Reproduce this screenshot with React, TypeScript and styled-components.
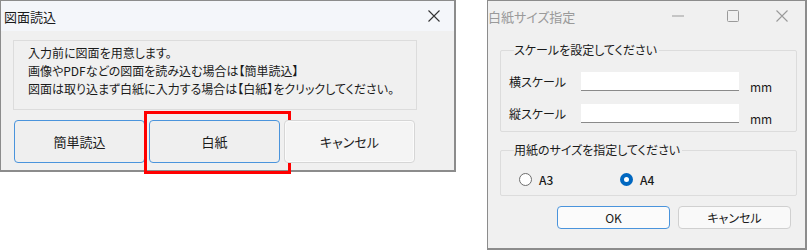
import React from 'react';
import styled, { createGlobalStyle } from 'styled-components';

const GlobalStyle = createGlobalStyle`
  html, body {
    margin: 0;
    padding: 0;
    background: #ffffff;
  }
  body {
    font-family: 'Noto Sans CJK JP', 'Noto Sans', sans-serif;
    font-feature-settings: 'palt';
    color: #1a1a1a;
  }
`;

const Page = styled.div`
  display: flex;
  align-items: flex-start;
  gap: 31px;
  width: 808px;
  height: 251px;
`;

const Dialog = styled.div<{ $w: number; $h: number }>`
  box-sizing: border-box;
  width: ${(p) => p.$w}px;
  height: ${(p) => p.$h}px;
  background: #f0f0f0;
  border: 1px solid #8c8c8c;
  border-right-width: 2px;
  border-bottom-width: 2px;
  display: flex;
  flex-direction: column;
`;

const TitleBar = styled.div<{ $inactive?: boolean }>`
  height: 30px;
  flex: none;
  display: flex;
  align-items: center;
  padding-left: ${(p) => (p.$inactive ? 0 : 3)}px;
  background: ${(p) => (p.$inactive ? '#f0f0f0' : '#f4f6fa')};
  color: ${(p) => (p.$inactive ? '#9a9a9a' : '#1a1a1a')};
  font-size: 13px;
`;

const Title = styled.span`
  flex: 1;
  padding-top: 1px;
`;

const Controls = styled.div`
  display: flex;
  align-items: center;
  height: 100%;
`;

const CtrlBtn = styled.div<{ $w: number }>`
  width: ${(p) => p.$w}px;
  height: 100%;
  display: flex;
  align-items: center;
  justify-content: center;
`;

/* 左ダイアログ */
const LeftBody = styled.div`
  padding: 9px 0 0 12px;
  display: flex;
  flex-direction: column;
  gap: 10px;
`;

const MessageBox = styled.div`
  box-sizing: border-box;
  width: 404px;
  height: 70px;
  border: 1px solid #dcdcdc;
  padding: 3px 0 0 14px;
  font-size: 12px;
  line-height: 18px;
`;

const ButtonRow = styled.div`
  display: grid;
  grid-template-columns: repeat(3, 131px);
  gap: 4px;
  margin-left: 1px;
`;

const BigButton = styled.button<{ $primary?: boolean }>`
  position: relative;
  box-sizing: border-box;
  height: 43px;
  border-radius: 4px;
  border: ${(p) => (p.$primary ? '1.5px solid #4a94dc' : '1px solid #d6d6d6')};
  background: ${(p) => (p.$primary ? '#efefef' : '#f4f4f4')};
  box-shadow: ${(p) => (p.$primary ? 'none' : 'inset 0 0 0 1px #fbfbfb')};
  font-family: inherit;
  font-feature-settings: 'palt';
  font-size: 13px;
  color: #1a1a1a;
  padding: 0;
`;

// 注釈の赤枠（ボタンの上に重ねる）
const Highlight = styled.span`
  position: absolute;
  left: -6px;
  right: -12px;
  top: -10px;
  bottom: -12px;
  border: 3px solid #ff0000;
  pointer-events: none;
`;

/* 右ダイアログ */
const RightBody = styled.div`
  padding: 11px 8px 0 12px;
  display: flex;
  flex-direction: column;
`;

const Group = styled.fieldset<{ $pt: number; $pb: number; $mt?: number }>`
  margin: ${(p) => p.$mt ?? 0}px 0 0 0;
  border: 1px solid #dcdcdc;
  border-radius: 2px;
  padding: ${(p) => p.$pt}px 0 ${(p) => p.$pb}px 8px;
  display: flex;
  flex-direction: column;
  gap: 13px;
`;

const Legend = styled.legend`
  margin-left: 5px;
  padding: 0 2px 0 0;
  font-size: 12px;
  line-height: 16px;
`;

const FieldRow = styled.div`
  display: flex;
  align-items: center;
  height: 19px;
`;

const FieldLabel = styled.span`
  width: 72px;
  font-size: 12px;
`;

const TextInput = styled.div`
  box-sizing: border-box;
  width: 158px;
  height: 19px;
  background: #ffffff;
  border-bottom: 1px solid #8a8a8a;
`;

const Unit = styled.span`
  margin-left: 11px;
  padding-top: 10px;
  font-size: 12px;
`;

const RadioRow = styled.div`
  display: flex;
  padding-left: 10px;
`;

const RadioItem = styled.label`
  width: 101px;
  display: flex;
  align-items: center;
  gap: 7px;
  font-size: 12px;
  font-weight: 500;
  height: 14px;
`;

const RadioCircle = styled.span<{ $checked?: boolean }>`
  box-sizing: border-box;
  width: 13px;
  height: 13px;
  border-radius: 50%;
  border: ${(p) => (p.$checked ? '4px solid #0067c0' : '1px solid #6e6e6e')};
  background: #ffffff;
`;

const FooterRow = styled.div`
  display: flex;
  justify-content: flex-end;
  gap: 8px;
  margin-top: 10px;
  padding-right: 6px;
`;

const SmallButton = styled.button<{ $primary?: boolean }>`
  box-sizing: border-box;
  width: 113px;
  height: 23px;
  border-radius: 4px;
  border: ${(p) => (p.$primary ? '1.5px solid #4a94dc' : '1px solid #d0d0d0')};
  background: ${(p) => (p.$primary ? '#fbfbfb' : '#f9f9f9')};
  font-family: inherit;
  font-feature-settings: 'palt';
  font-size: 12px;
  color: #1a1a1a;
  padding: 0;
`;

const CloseIcon = ({ color }: { color: string }) => (
  <svg width="12" height="12" viewBox="0 0 12 12">
    <path d="M0.5 0.5L11.5 11.5M11.5 0.5L0.5 11.5" stroke={color} strokeWidth="1.1" fill="none" />
  </svg>
);

export default function App() {
  return (
    <>
      <GlobalStyle />
      <Page>
        <Dialog $w={456} $h={172}>
          <TitleBar>
            <Title>図面読込</Title>
            <Controls>
              <CtrlBtn $w={40}>
                <CloseIcon color="#333" />
              </CtrlBtn>
            </Controls>
          </TitleBar>
          <LeftBody>
            <MessageBox>
              <div>入力前に図面を用意します。</div>
              <div>画像やPDFなどの図面を読み込む場合は【簡単読込】</div>
              <div>図面は取り込まず白紙に入力する場合は【白紙】をクリックしてください。</div>
            </MessageBox>
            <ButtonRow>
              <BigButton $primary>簡単読込</BigButton>
              <BigButton $primary>
                白紙
                <Highlight />
              </BigButton>
              <BigButton>キャンセル</BigButton>
            </ButtonRow>
          </LeftBody>
        </Dialog>

        <Dialog $w={320} $h={250}>
          <TitleBar $inactive>
            <Title>白紙サイズ指定</Title>
            <Controls>
              <CtrlBtn $w={58}>
                <svg width="12" height="2" viewBox="0 0 12 2">
                  <path d="M0 1H12" stroke="#9a9a9a" strokeWidth="1" />
                </svg>
              </CtrlBtn>
              <CtrlBtn $w={52}>
                <svg width="12" height="12" viewBox="0 0 12 12">
                  <rect x="0.5" y="0.5" width="11" height="11" rx="1" stroke="#9a9a9a" fill="none" />
                </svg>
              </CtrlBtn>
              <CtrlBtn $w={46}>
                <CloseIcon color="#9a9a9a" />
              </CtrlBtn>
            </Controls>
          </TitleBar>
          <RightBody>
            <Group $pt={14} $pb={8}>
              <Legend>スケールを設定してください</Legend>
              <FieldRow>
                <FieldLabel>横スケール</FieldLabel>
                <TextInput />
                <Unit>mm</Unit>
              </FieldRow>
              <FieldRow>
                <FieldLabel>縦スケール</FieldLabel>
                <TextInput />
                <Unit>mm</Unit>
              </FieldRow>
            </Group>
            <Group $pt={14} $pb={9} $mt={10}>
              <Legend>用紙のサイズを指定してください</Legend>
              <RadioRow>
                <RadioItem>
                  <RadioCircle />
                  A3
                </RadioItem>
                <RadioItem>
                  <RadioCircle $checked />
                  A4
                </RadioItem>
              </RadioRow>
            </Group>
            <FooterRow>
              <SmallButton $primary>OK</SmallButton>
              <SmallButton>キャンセル</SmallButton>
            </FooterRow>
          </RightBody>
        </Dialog>
      </Page>
    </>
  );
}
